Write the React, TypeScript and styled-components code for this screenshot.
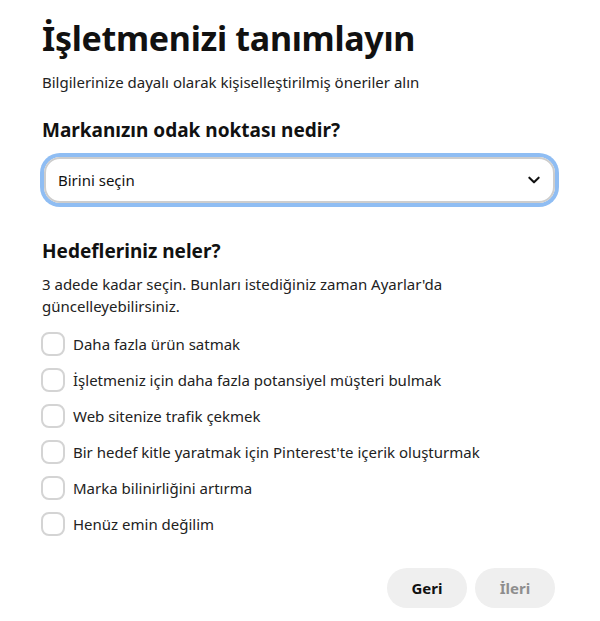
import React from "react";
import styled, { createGlobalStyle } from "styled-components";

const GlobalStyle = createGlobalStyle`
  html, body {
    margin: 0;
    padding: 0;
    background: #fff;
  }
  body {
    font-family: "Noto Sans", "Open Sans", sans-serif;
    color: #111;
  }
`;

const Page = styled.div`
  width: 600px;
  height: 621px;
  box-sizing: border-box;
  padding: 14px 45px 0 42px;
  display: flex;
  flex-direction: column;
`;

const Title = styled.h1`
  margin: 0;
  font-size: 34px;
  font-weight: 700;
  line-height: 48px;
  letter-spacing: -0.3px;
`;

const Subtitle = styled.p`
  margin: 10px 0 0;
  font-size: 15px;
  line-height: 20px;
  color: #222;
`;

const SectionTitle = styled.h2<{ $gap: number }>`
  margin: ${(p) => p.$gap}px 0 0;
  font-size: 19px;
  font-weight: 700;
  line-height: 28px;
`;

const SelectBox = styled.div`
  margin: 13px 0 0 2px;
  height: 46px;
  box-sizing: border-box;
  border: 2px solid #cdcdcd;
  border-radius: 16px;
  box-shadow: 0 0 0 4px #8fbdf3;
  display: flex;
  align-items: center;
  justify-content: space-between;
  padding: 0 12px 0 12px;
  font-size: 15px;
  color: #111;
`;

const Chevron = styled.svg`
  width: 14px;
  height: 14px;
`;

const Desc = styled.p`
  margin: 8px 0 0;
  font-size: 15px;
  line-height: 22px;
  color: #222;
  max-width: 420px;
`;

const OptionList = styled.div`
  margin-top: 15px;
  display: flex;
  flex-direction: column;
  gap: 12px;
`;

const Option = styled.label`
  display: flex;
  align-items: center;
  gap: 8px;
  font-size: 15px;
  line-height: 24px;
  color: #222;
`;

const Box = styled.span`
  width: 24px;
  height: 24px;
  box-sizing: border-box;
  border: 2px solid #d4d4d4;
  border-radius: 8px;
  margin-left: -1px;
`;

const Footer = styled.div`
  margin-top: auto;
  margin-bottom: 13px;
  display: flex;
  justify-content: flex-end;
  gap: 8px;
`;

const Button = styled.button<{ $disabled?: boolean }>`
  width: 80px;
  height: 40px;
  border: none;
  border-radius: 20px;
  background: #efefef;
  font-family: inherit;
  font-size: 15px;
  font-weight: 700;
  color: ${(p) => (p.$disabled ? "#8e8e8e" : "#111")};
`;

const goals = [
  "Daha fazla ürün satmak",
  "İşletmeniz için daha fazla potansiyel müşteri bulmak",
  "Web sitenize trafik çekmek",
  "Bir hedef kitle yaratmak için Pinterest'te içerik oluşturmak",
  "Marka bilinirliğini artırma",
  "Henüz emin değilim",
];

export default function App() {
  return (
    <>
      <GlobalStyle />
      <Page>
        <Title>İşletmenizi tanımlayın</Title>
        <Subtitle>Bilgilerinize dayalı olarak kişiselleştirilmiş öneriler alın</Subtitle>
        <SectionTitle $gap={24}>Markanızın odak noktası nedir?</SectionTitle>
        <SelectBox>
          <span>Birini seçin</span>
          <Chevron viewBox="0 0 24 24">
            <path d="M4 8l8 8 8-8" fill="none" stroke="#111" strokeWidth="3.5" strokeLinecap="round" strokeLinejoin="round" />
          </Chevron>
        </SelectBox>
        <SectionTitle $gap={34}>Hedefleriniz neler?</SectionTitle>
        <Desc>3 adede kadar seçin. Bunları istediğiniz zaman Ayarlar'da güncelleyebilirsiniz.</Desc>
        <OptionList>
          {goals.map((g) => (
            <Option key={g}>
              <Box />
              {g}
            </Option>
          ))}
        </OptionList>
        <Footer>
          <Button>Geri</Button>
          <Button $disabled>İleri</Button>
        </Footer>
      </Page>
    </>
  );
}
